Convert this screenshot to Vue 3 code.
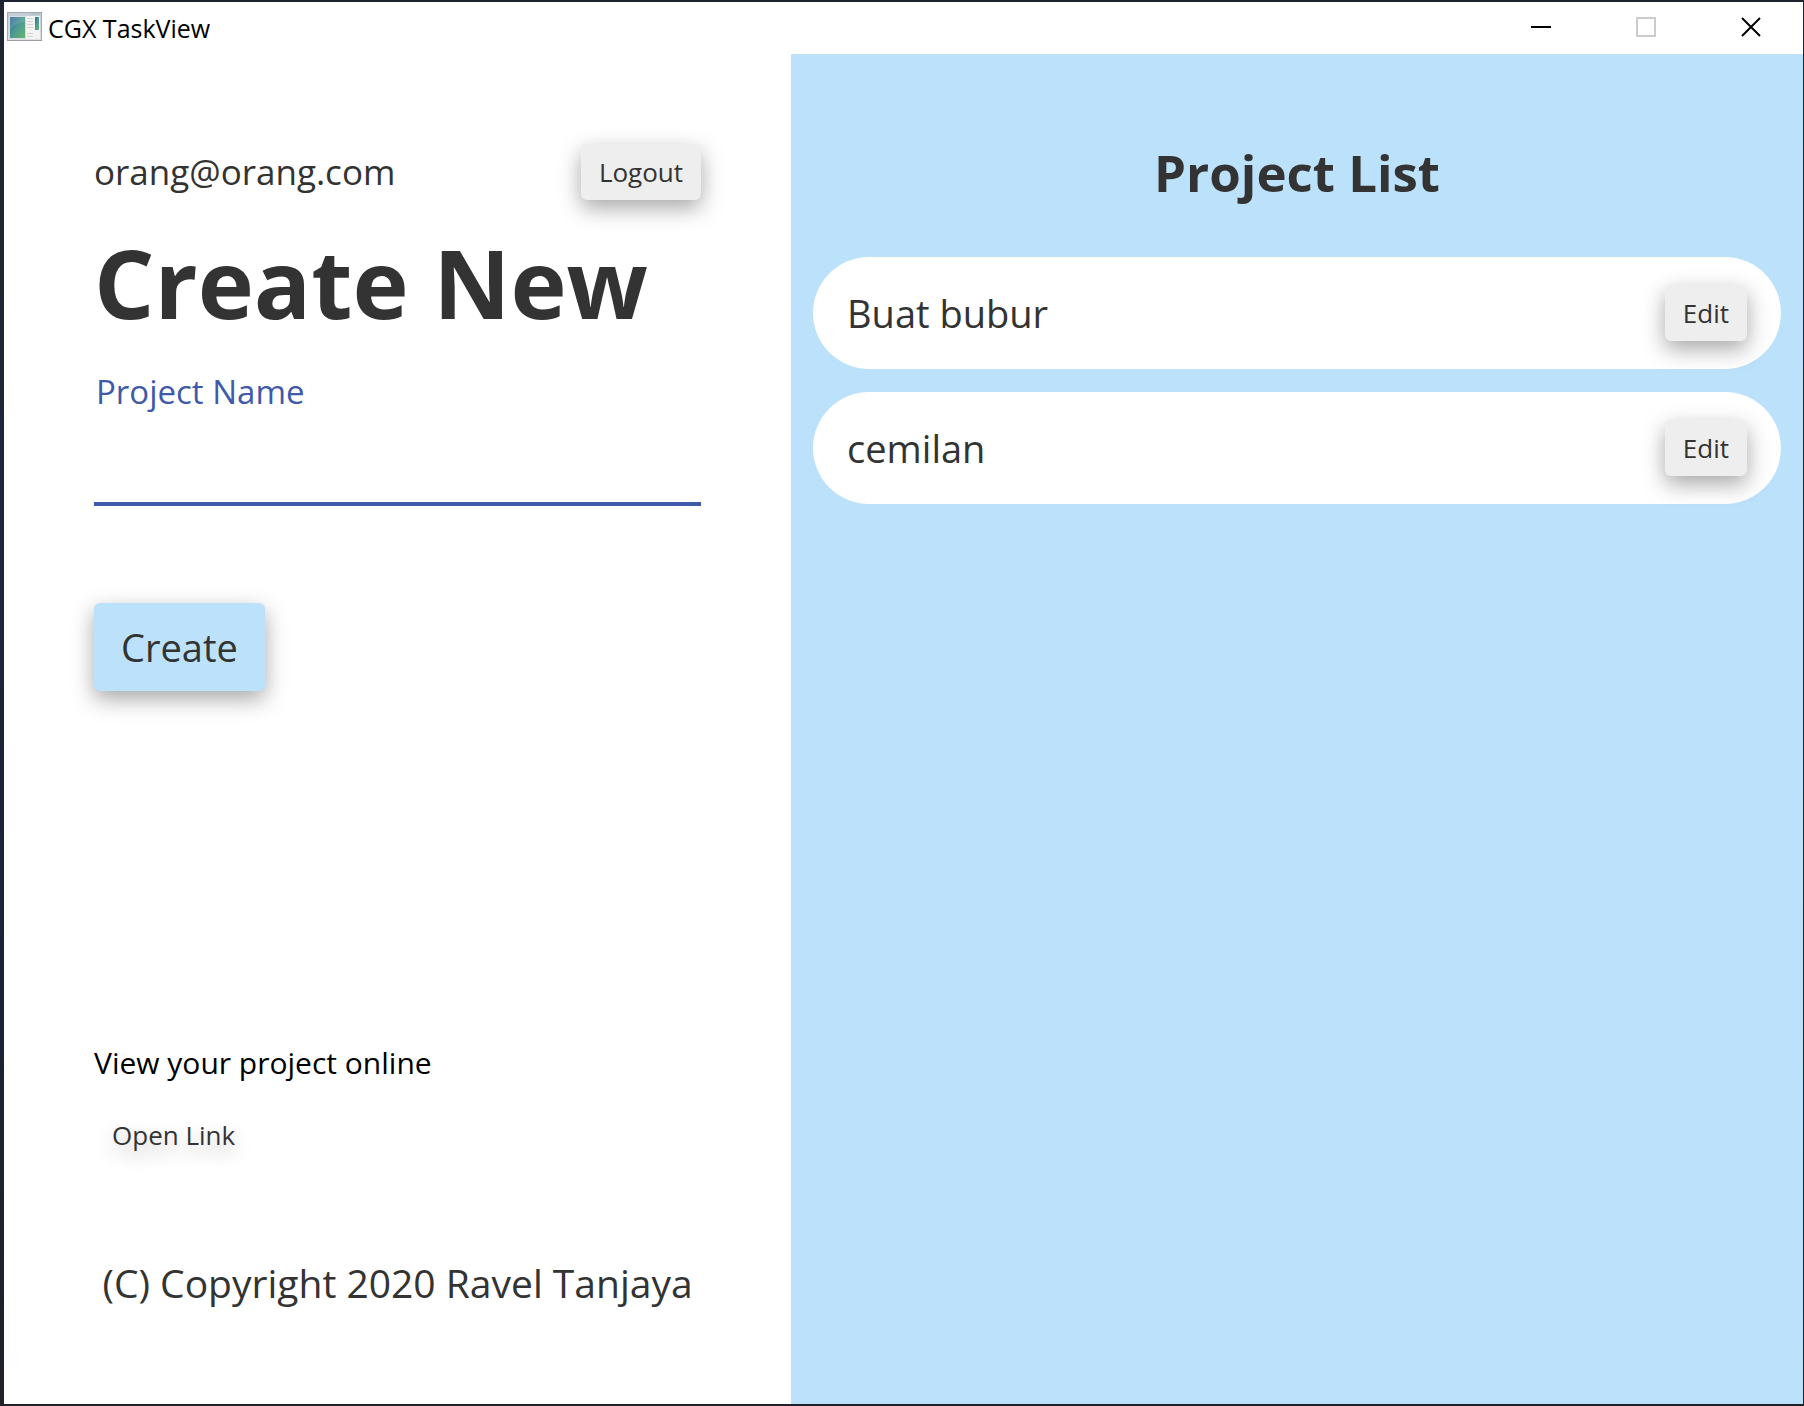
<script setup>
import { ref } from 'vue'

const projectName = ref('')
const projects = ['Buat bubur', 'cemilan']
</script>

<template>
  <div class="window">
    <header class="titlebar">
      <svg class="app-icon" width="36" height="30" viewBox="0 0 36 30" aria-hidden="true">
        <defs>
          <linearGradient id="pane" x1="0" y1="0" x2="1" y2="1">
            <stop offset="0" stop-color="#35689c" />
            <stop offset="0.5" stop-color="#4d9a92" />
            <stop offset="1" stop-color="#67b56c" />
          </linearGradient>
          <linearGradient id="frame" x1="0" y1="0" x2="0" y2="1">
            <stop offset="0" stop-color="#c3ccd6" />
            <stop offset="1" stop-color="#e0e0e4" />
          </linearGradient>
        </defs>
        <rect x="0.5" y="0.5" width="34" height="28" fill="url(#frame)" stroke="#a3a9b0" />
        <path d="M24 2h9" stroke="#a4b4c6" />
        <rect x="2" y="4" width="31" height="23" fill="#f3f3f4" />
        <rect x="2" y="4" width="17" height="23" fill="#d9dde2" />
        <rect x="3" y="5" width="15" height="21" fill="url(#pane)" />
        <path d="M3 17q5-6 15-7V5H3z" fill="#fff" opacity="0.12" />
        <path d="M20 6.500h6M20 9.500h6M20 12.500h6M20 15.500h6M20 21.500h6M20 24.500h6" stroke="#d4d4d4" />
        <rect x="28" y="5" width="4" height="13" fill="url(#pane)" />
        <path d="M0 28.500h35" stroke="#9a9fa6" />
      </svg>
      <span class="app-name">CGX TaskView</span>
      <div class="controls">
        <button type="button" class="control" aria-label="Minimize">
          <svg width="20" height="20" viewBox="0 0 20 20"><path d="M0 10h20" stroke="#000" stroke-width="2" /></svg>
        </button>
        <button type="button" class="control" aria-label="Maximize" disabled>
          <svg width="20" height="20" viewBox="0 0 20 20"><rect x="1" y="1" width="18" height="18" fill="none" stroke="#ccc" stroke-width="2" /></svg>
        </button>
        <button type="button" class="control" aria-label="Close">
          <svg width="20" height="20" viewBox="0 0 20 20"><path d="M1 1l18 18M19 1L1 19" stroke="#000" stroke-width="2" /></svg>
        </button>
      </div>
    </header>

    <main class="content">
      <section class="create">
        <div class="account">
          <span class="email">orang@orang.com</span>
          <button type="button" class="btn">Logout</button>
        </div>
        <h1>Create New</h1>
        <label for="project-name">Project Name</label>
        <input id="project-name" v-model="projectName" type="text" />
        <button type="button" class="btn primary">Create</button>
        <p class="online">View your project online</p>
        <button type="button" class="btn flat">Open Link</button>
        <p class="copyright">(C) Copyright 2020 Ravel Tanjaya</p>
      </section>

      <section class="projects">
        <h2>Project List</h2>
        <ul>
          <li v-for="project in projects" :key="project">
            <span>{{ project }}</span>
            <button type="button" class="btn">Edit</button>
          </li>
        </ul>
      </section>
    </main>
  </div>
</template>

<style>
body {
  margin: 0;
}
</style>

<style scoped>
.window {
  box-sizing: border-box;
  display: flex;
  flex-direction: column;
  min-height: 100vh;
  padding: 2px 1px 2px 4px;
  background: linear-gradient(#1f2530, #1c2638 40%, #1b2233 75%, #202128);
  color: #333;
  font-family: "Open Sans", "Noto Sans", sans-serif;
}

.titlebar {
  display: flex;
  height: 52px;
  background: #fff;
}

.app-icon {
  margin: 10px 5px 0 3px;
}

.app-name {
  color: #000;
  font-size: 25px;
  line-height: 52px;
}

.controls {
  display: flex;
  margin-left: auto;
}

.control {
  display: flex;
  align-items: center;
  justify-content: center;
  width: 105px;
  height: 50px;
  padding: 0;
  border: 0;
  background: none;
}

.content {
  display: grid;
  flex: 1;
  grid-template-columns: minmax(0, 7fr) minmax(0, 9fr);
}

.create {
  display: flex;
  flex-direction: column;
  align-items: flex-start;
  padding: 90px 90px 93px;
  background: #fff;
}

.account {
  display: flex;
  align-items: center;
  justify-content: space-between;
  align-self: stretch;
}

.email {
  font-size: 35px;
  line-height: 56px;
}

.btn {
  height: 56px;
  padding: 0 18px;
  border: 0;
  border-radius: 6px;
  background: #eee;
  box-shadow: 0 8px 22px rgba(0, 0, 0, 0.35);
  color: #333;
  font-family: inherit;
  font-size: 26px;
  line-height: 56px;
}

.btn.primary {
  height: 88px;
  margin-top: 97px;
  padding: 0 27px;
  background: #bbe1fb;
  font-size: 38px;
  line-height: 88px;
}

.btn.flat {
  margin-top: 24px;
  background: none;
  box-shadow: none;
  text-shadow: 0 8px 20px rgba(0, 0, 0, 0.3);
}

h1 {
  margin: 26px 0 32px;
  font-size: 95px;
  font-weight: 700;
  line-height: 112px;
  white-space: nowrap;
}

label {
  padding-left: 2px;
  color: #4059a9;
  font-size: 33px;
  line-height: 44px;
}

input {
  box-sizing: border-box;
  width: 100%;
  height: 92px;
  padding: 0;
  border: 0;
  border-bottom: 4px solid #4059a9;
  outline: 0;
  background: none;
  color: #333;
  font-family: inherit;
  font-size: 33px;
}

p {
  margin: 0;
}

.online {
  margin-top: auto;
  color: #000;
  font-size: 30px;
  line-height: 40px;
}

.copyright {
  align-self: center;
  margin-top: 92px;
  font-size: 39px;
  line-height: 56px;
  white-space: nowrap;
}

.projects {
  padding: 82px 22px 22px;
  background: #bbe1fb;
}

h2 {
  margin: 0 0 49px;
  font-size: 51px;
  font-weight: 700;
  line-height: 72px;
  text-align: center;
}

ul {
  display: flex;
  flex-direction: column;
  gap: 23px;
  margin: 0;
  padding: 0;
  list-style: none;
}

li {
  display: flex;
  align-items: center;
  justify-content: space-between;
  height: 112px;
  padding: 0 34px;
  border-radius: 56px;
  background: #fff;
  font-size: 38px;
}
</style>
